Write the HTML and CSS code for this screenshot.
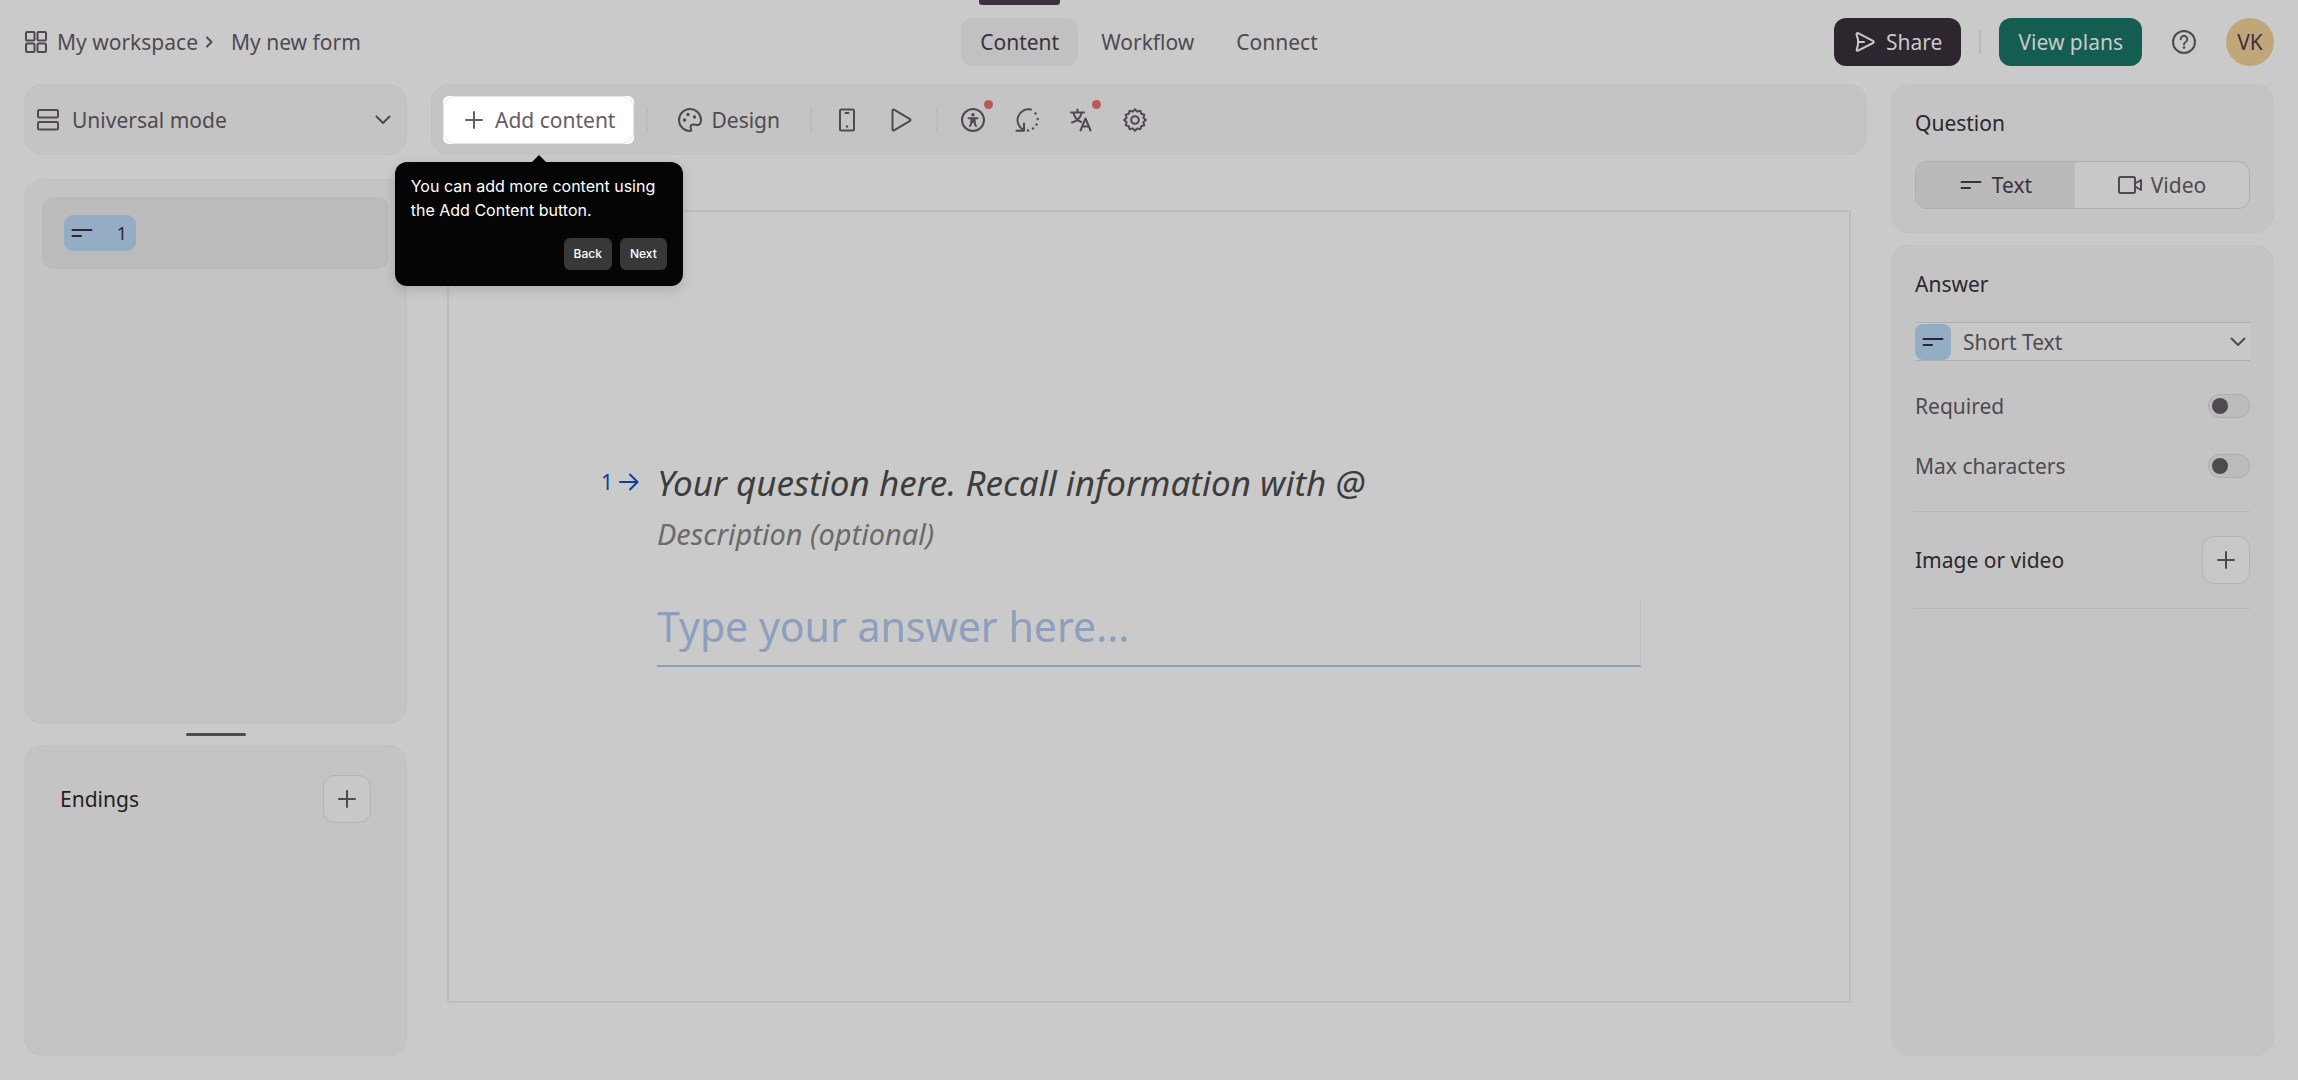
FILE: index.html
```
<!DOCTYPE html>
<html lang="en">
<head>
  <meta charset="UTF-8">
  <meta name="viewport" content="width=device-width, initial-scale=1.0">
  <title>My new form</title>
  <link rel="stylesheet" href="styles.css">
</head>
<body>
  <header class="topbar">
    <nav class="breadcrumb" aria-label="Breadcrumb">
      <a href="#" class="crumb">
        <svg class="icon" viewBox="0 0 24 24"><rect x="2" y="2" width="8.5" height="8.5" rx="1"/><rect x="13.5" y="2" width="8.5" height="8.5" rx="1"/><rect x="2" y="13.5" width="8.5" height="8.5" rx="1"/><rect x="13.5" y="13.5" width="8.5" height="8.5" rx="1"/></svg>
        My workspace
      </a>
      <svg class="crumb-arrow" viewBox="0 0 12 12"><path d="M4 1.5 8.5 6 4 10.5"/></svg>
      <a href="#" class="crumb">My new form</a>
    </nav>

    <nav class="tabs" aria-label="Sections">
      <a href="#" class="tab active">Content</a>
      <a href="#" class="tab">Workflow</a>
      <a href="#" class="tab">Connect</a>
    </nav>

    <div class="actions">
      <button type="button" class="btn btn-dark">
        <svg class="icon" viewBox="0 0 24 24"><path d="M3.500 4.200c0-.8.8-1.300 1.500-1l15 7.600c.9.500.9 1.700 0 2.200l-15 7.700c-.7.300-1.500-.2-1.300-1l1.300-5.300V9.500z"/><path d="M5 12h6"/></svg>
        Share
      </button>
      <span class="divider"></span>
      <button type="button" class="btn btn-green">View plans</button>
      <button type="button" class="help-btn" aria-label="Help">
        <svg class="icon" viewBox="0 0 24 24"><circle cx="12" cy="12" r="11"/><path d="M8.700 9.200a3.300 3.300 0 1 1 5 2.800c-1 .600-1.700 1.100-1.700 2.500"/><circle class="dot" cx="12" cy="17.500" r="1.300"/></svg>
      </button>
      <button type="button" class="avatar">VK</button>
    </div>
  </header>

  <main class="workspace">
    <aside class="sidebar">
      <div class="panel mode">
        <svg class="icon" viewBox="0 0 24 24"><rect x="2" y="2" width="20" height="7.500" rx="1.500"/><rect x="2" y="14" width="20" height="7.500" rx="1.500"/></svg>
        <select class="mode-select" aria-label="Mode">
          <option>Universal mode</option>
        </select>
        <svg class="chevron" viewBox="0 0 16 16"><path d="M1.500 4.500 8 11l6.500-6.500"/></svg>
      </div>

      <div class="panel questions">
        <button type="button" class="question-item">
          <span class="badge">
            <svg class="icon lines" viewBox="0 0 24 24"><path d="M2.500 9h19M2.500 15h8.500"/></svg>
            <span>1</span>
          </span>
        </button>
      </div>

      <div class="handle"></div>

      <div class="panel endings">
        <h2 class="heading endings-title">Endings</h2>
        <button type="button" class="add-btn" aria-label="Add ending">
          <svg class="icon" viewBox="0 0 24 24"><path d="M12 4v16M4 12h16"/></svg>
        </button>
      </div>
    </aside>

    <section class="editor">
      <div class="panel toolbar">
        <div class="add-content-wrap">
          <button type="button" class="add-content">
            <svg class="icon" viewBox="0 0 24 24"><path d="M12 4v16M4 12h16"/></svg>
            Add content
          </button>
          <div class="tooltip" role="dialog">
            <p class="tooltip-text">You can add more content using the Add Content button.</p>
            <div class="tooltip-actions">
              <button type="button" class="tooltip-btn">Back</button>
              <button type="button" class="tooltip-btn">Next</button>
            </div>
          </div>
        </div>
        <span class="divider soft"></span>
        <button type="button" class="design-btn">
          <svg class="icon" viewBox="0 0 24 24"><path d="M12 1a11 11 0 0 0 0 22c1.200 0 1.500-.8 1-1.800-.9-2-.7-4.700 2.200-4.700 2 0 3.300.8 5 .5 1.800-.4 2.800-2.600 2.800-5A11 11 0 0 0 12 1z"/><circle class="dot" cx="10" cy="6.500" r="1.700"/><circle class="dot" cx="6.500" cy="12" r="1.700"/><circle class="dot" cx="16.500" cy="9" r="1.700"/></svg>
          Design
        </button>
        <span class="divider soft"></span>
        <div class="tool-group">
          <button type="button" class="tool" aria-label="Mobile view">
            <svg class="icon" viewBox="0 0 24 24"><rect x="5" y="1.500" width="14" height="21" rx="1.500"/><path d="M10.500 5h3"/><circle class="dot" cx="12" cy="18.500" r="1.200"/></svg>
          </button>
          <button type="button" class="tool" aria-label="Preview">
            <svg class="icon" viewBox="0 0 24 24"><path d="M3.500 2.500c0-.8.8-1.300 1.500-.9l16 9.500c.7.400.7 1.400 0 1.800l-16 9.500c-.7.400-1.500-.1-1.500-.9z"/></svg>
          </button>
        </div>
        <span class="divider soft"></span>
        <div class="tool-group">
          <button type="button" class="tool flagged" aria-label="Accessibility">
            <svg class="icon" viewBox="0 0 24 24"><circle cx="12" cy="12" r="11"/><circle class="dot" cx="12" cy="6.700" r="1.700"/><path d="M7.500 10.200h9M12 10.500v3.500M9 18l1-1.500L10.500 11M15 18l-1-1.500-.5-5.500"/></svg>
          </button>
          <button type="button" class="tool" aria-label="Logic">
            <svg class="icon" viewBox="0 0 24 24"><path d="M16 1.500A11 11 0 0 0 8.500 22M1.500 22.800H9V15.500"/><circle class="dot" cx="20.500" cy="5.500" r="1.200"/><circle class="dot" cx="22.700" cy="11" r="1.200"/><circle class="dot" cx="21.500" cy="16.500" r="1.200"/><circle class="dot" cx="18" cy="20.500" r="1.200"/><circle class="dot" cx="13" cy="22.500" r="1.200"/></svg>
          </button>
          <button type="button" class="tool flagged" aria-label="Translate">
            <svg class="icon" viewBox="0 0 24 24"><path d="M2 4.500h13M8.500 1.500v3M4.500 5c1 4.500 4 7.500 7.500 9M12.500 5c-1 4.500-4.500 8-9.500 9.500M11.500 22.500l5-12 5 12M13.500 18.500h6"/></svg>
          </button>
          <button type="button" class="tool" aria-label="Settings">
            <svg class="icon" viewBox="0 0 24 24"><path d="M12 1.200 14.300 3.600 17.400 2.700 18.200 5.800 21.300 6.600 20.400 9.700 22.800 12 20.400 14.300 21.300 17.400 18.200 18.200 17.400 21.300 14.300 20.400 12 22.800 9.700 20.400 6.600 21.300 5.800 18.200 2.700 17.400 3.600 14.300 1.200 12 3.600 9.700 2.700 6.600 5.800 5.800 6.600 2.700 9.700 3.600z"/><circle cx="12" cy="12" r="3.800"/></svg>
          </button>
        </div>
      </div>

      <div class="canvas">
        <div class="question-number">
          <span>1</span>
          <svg viewBox="0 0 20 20"><path d="M1 10h17M11 2.500l7.500 7.500-7.500 7.500"/></svg>
        </div>
        <div class="question">
          <input type="text" class="question-title" aria-label="Question" placeholder="Your question here. Recall information with @">
          <input type="text" class="question-description" aria-label="Description" placeholder="Description (optional)">
          <input type="text" class="question-answer" aria-label="Answer" placeholder="Type your answer here...">
        </div>
      </div>
    </section>

    <aside class="settings">
      <div class="panel settings-panel">
        <h2 class="heading">Question</h2>
        <div class="segmented">
          <button type="button" class="segment selected">
            <svg class="icon lines" viewBox="0 0 24 24"><path d="M2.500 9h19M2.500 15h8.500"/></svg>
            Text
          </button>
          <button type="button" class="segment">
            <svg class="icon" viewBox="0 0 24 24"><rect x="1" y="4" width="16" height="16" rx="1.500"/><path d="M17 10.500 23 7v10l-6-3.500"/></svg>
            Video
          </button>
        </div>
      </div>

      <div class="panel settings-panel answer-panel">
        <h2 class="heading">Answer</h2>
        <div class="answer-type">
          <span class="type-icon"><svg class="icon lines" viewBox="0 0 24 24"><path d="M2.500 9h19M2.500 15h8.500"/></svg></span>
          <select class="type-select" aria-label="Answer type">
            <option>Short Text</option>
          </select>
          <svg class="chevron" viewBox="0 0 16 16"><path d="M1.500 4.500 8 11l6.500-6.500"/></svg>
        </div>
        <div class="option">
          <label for="required">Required</label>
          <input type="checkbox" class="toggle" id="required">
        </div>
        <div class="option">
          <label for="maxChars">Max characters</label>
          <input type="checkbox" class="toggle" id="maxChars">
        </div>
        <div class="media">
          <h2 class="heading">Image or video</h2>
          <button type="button" class="add-btn" aria-label="Add image or video">
            <svg class="icon" viewBox="0 0 24 24"><path d="M12 4v16M4 12h16"/></svg>
          </button>
        </div>
      </div>
    </aside>
  </main>
</body>
</html>
```

FILE: styles.css
```
* {
  box-sizing: border-box;
  margin: 0;
  padding: 0;
}

body {
  font-family: "Noto Sans", sans-serif;
  font-size: 21px;
  line-height: 30px;
  color: #504951;
  background-color: #cacaca;
  min-height: 100vh;
  display: flex;
  flex-direction: column;
}

a {
  color: inherit;
  text-decoration: none;
}

button,
select,
input {
  font: inherit;
  color: inherit;
  background: none;
  border: none;
  outline: none;
}

button,
select {
  cursor: pointer;
}

select {
  appearance: none;
}

svg {
  fill: none;
  stroke: currentColor;
  stroke-width: 2;
  stroke-linecap: round;
  stroke-linejoin: round;
  flex-shrink: 0;
}

.icon {
  width: 24px;
  height: 24px;
  display: block;
}

.dot {
  fill: currentColor;
  stroke: none;
}

.chevron {
  width: 16px;
  height: 16px;
  pointer-events: none;
}

.divider {
  width: 2px;
  height: 24px;
  background-color: #b8b8b8;
}

.divider.soft {
  background-color: #bcbcbc;
}

.heading {
  font-size: 21px;
  font-weight: 400;
  line-height: 30px;
  color: #2e262f;
}

.panel {
  background-color: #c4c4c4;
  border: 1px solid #c2c2c2;
  border-radius: 18px;
}

/* top bar */

.topbar {
  height: 84px;
  padding: 0 24px;
  display: grid;
  grid-template-columns: 1fr auto 1fr;
  align-items: center;
}

.breadcrumb {
  display: flex;
  align-items: center;
}

.crumb {
  display: flex;
  align-items: center;
  gap: 9px;
}

.crumb-arrow {
  width: 12px;
  height: 12px;
  margin: 0 16px 0 5px;
}

.tabs {
  display: flex;
  gap: 4px;
  height: 100%;
  align-items: center;
}

.tab {
  position: relative;
  padding: 9px 19px;
  border-radius: 12px;
}

.tab.active {
  color: #3e313f;
  background-color: #c1c1c1;
}

.tab.active::before {
  content: "";
  position: absolute;
  top: -18px;
  left: 18px;
  right: 18px;
  height: 5px;
  border-radius: 0 0 3px 3px;
  background-color: #3e313f;
}

.actions {
  display: flex;
  align-items: center;
  justify-content: flex-end;
}

.btn {
  height: 48px;
  padding: 0 19px;
  border-radius: 12px;
  color: #cacaca;
  display: flex;
  align-items: center;
  gap: 9px;
}

.btn-dark {
  background-color: #2e262f;
  margin-right: 18px;
}

.btn-green {
  background-color: #145d51;
  margin-left: 18px;
}

.help-btn {
  margin: 0 30px;
}

.avatar {
  width: 48px;
  height: 48px;
  border-radius: 50%;
  background-color: #c1a67a;
  color: #3e313f;
}

/* layout */

.workspace {
  flex: 1;
  padding: 0 24px 24px;
  display: grid;
  grid-template-columns: 383px minmax(0, 1fr) 383px;
  gap: 24px;
}

.sidebar {
  display: grid;
  grid-template-rows: auto 7fr auto 4fr;
}

.editor,
.settings {
  display: flex;
  flex-direction: column;
}

/* left column */

.mode {
  height: 71px;
  padding: 0 15px 0 11px;
  margin-bottom: 24px;
  display: flex;
  align-items: center;
}

.mode-select {
  flex: 1;
  height: 100%;
  padding-left: 12px;
}

.questions {
  padding: 17px;
}

.question-item {
  width: 100%;
  height: 72px;
  padding: 0 22px;
  border-radius: 12px;
  background-color: #bbbbbb;
  display: flex;
  align-items: center;
}

.badge {
  width: 72px;
  height: 36px;
  padding: 0 9px 0 6px;
  border-radius: 9px;
  background-color: #95acc5;
  color: #2e262f;
  font-size: 18px;
  display: flex;
  align-items: center;
  justify-content: space-between;
}

.handle {
  width: 60px;
  height: 3px;
  margin: 9px auto;
  border-radius: 2px;
  background-color: #504951;
}

.endings {
  padding: 29px 35px;
  display: flex;
  align-items: flex-start;
  justify-content: space-between;
}

.endings-title {
  line-height: 48px;
  color: #1f1f1f;
}

.add-btn {
  width: 48px;
  height: 48px;
  border: 1px solid #b3b3b3;
  border-radius: 12px;
  background-color: #c8c8c8;
  display: flex;
  align-items: center;
  justify-content: center;
}

/* toolbar */

.toolbar {
  height: 71px;
  padding: 0 11px;
  display: flex;
  align-items: center;
}

.add-content-wrap {
  position: relative;
  margin-right: 12px;
  border-radius: 6px;
  background-color: #ffffff;
}

.add-content {
  height: 48px;
  padding: 0 18px;
  border: 1px solid #e4e4e4;
  border-radius: 12px;
  color: #655d67;
  display: flex;
  align-items: center;
  gap: 9px;
}

.tooltip {
  position: absolute;
  top: calc(100% + 18px);
  left: calc(50% - 144px);
  z-index: 10;
  width: 288px;
  padding: 12px 16px 16px;
  border-radius: 12px;
  background-color: #050505;
  box-shadow: 0 4px 12px rgba(0, 0, 0, 0.15);
  color: #ffffff;
  font-family: Inter, sans-serif;
}

.tooltip::before {
  content: "";
  position: absolute;
  top: -7px;
  left: calc(50% - 7px);
  border: 7px solid transparent;
  border-top: none;
  border-bottom-color: #050505;
}

.tooltip-text {
  font-size: 16px;
  line-height: 24px;
  margin-bottom: 16px;
}

.tooltip-actions {
  display: flex;
  justify-content: flex-end;
  gap: 8px;
}

.tooltip-btn {
  height: 32px;
  padding: 0 10px;
  border-radius: 6px;
  background-color: #383838;
  font-size: 12px;
  font-weight: 500;
}

.design-btn {
  display: flex;
  align-items: center;
  gap: 9px;
  margin: 0 30px;
}

.tool-group {
  display: flex;
  gap: 6px;
  padding: 0 11px;
}

.tool {
  position: relative;
  width: 48px;
  height: 48px;
  display: flex;
  align-items: center;
  justify-content: center;
}

.tool.flagged::after {
  content: "";
  position: absolute;
  top: 4px;
  right: 4px;
  width: 9px;
  height: 9px;
  border-radius: 50%;
  background-color: #b65a5a;
}

/* canvas */

.canvas {
  flex: 1;
  margin: 55px 16px 53px;
  padding-top: 246px;
  border: 2px solid #bdbdbd;
  display: grid;
  grid-template-columns: 1fr minmax(0, 984px) 1fr;
  align-items: start;
}

.question-number {
  height: 48px;
  padding-right: 18px;
  display: flex;
  align-items: center;
  justify-content: flex-end;
  gap: 6px;
  color: #0d3f9e;
}

.question-number svg {
  width: 20px;
  height: 20px;
}

.question {
  display: flex;
  flex-direction: column;
}

.question input::placeholder {
  color: inherit;
  opacity: 1;
}

.question-title {
  height: 48px;
  font-size: 35px;
  font-style: italic;
  color: #3d3d3d;
}

.question-description {
  height: 36px;
  margin-top: 9px;
  font-size: 29px;
  font-style: italic;
  color: #6b6b6b;
}

.question-answer {
  height: 68px;
  margin-top: 48px;
  padding-bottom: 12px;
  font-size: 41px;
  color: #8d9fbd;
  border-right: 1px solid #c2c2c2;
  border-bottom: 2px solid #8a9fb9;
}

/* right column */

.settings {
  gap: 12px;
}

.settings-panel {
  padding: 23px;
}

.settings-panel > .heading {
  margin-bottom: 23px;
}

.segmented {
  height: 48px;
  border: 1px solid #afafaf;
  border-radius: 12px;
  overflow: hidden;
  display: flex;
  background-color: #c8c8c8;
}

.segment {
  flex: 1 1 auto;
  display: flex;
  align-items: center;
  justify-content: center;
  gap: 9px;
}

.segment.selected {
  color: #3e313f;
  background-color: #bababa;
}

.answer-panel {
  flex: 1;
}

.answer-type {
  height: 39px;
  margin-bottom: 30px;
  border-top: 1px solid #b0b0b0;
  border-bottom: 1px solid #b0b0b0;
  background-color: #c8c8c8;
  display: flex;
  align-items: center;
  padding-right: 4px;
}

.type-icon {
  width: 36px;
  height: 36px;
  border-radius: 8px;
  background-color: #95acc5;
  color: #2e262f;
  display: flex;
  align-items: center;
  justify-content: center;
}

.type-select {
  flex: 1;
  padding-left: 12px;
}

.option {
  display: flex;
  align-items: center;
  justify-content: space-between;
  margin-bottom: 30px;
}

.toggle {
  appearance: none;
  width: 42px;
  height: 24px;
  padding: 3px;
  border: 1px solid #adadad;
  border-radius: 12px;
  background-color: #bcbcbc;
  cursor: pointer;
}

.toggle::before {
  content: "";
  display: block;
  width: 16px;
  height: 16px;
  border-radius: 50%;
  background-color: #504951;
}

.toggle:checked::before {
  margin-left: auto;
}

.media {
  padding: 24px 0;
  border-top: 1px solid #b9b9b9;
  border-bottom: 1px solid #b9b9b9;
  display: flex;
  align-items: center;
  justify-content: space-between;
}
```
